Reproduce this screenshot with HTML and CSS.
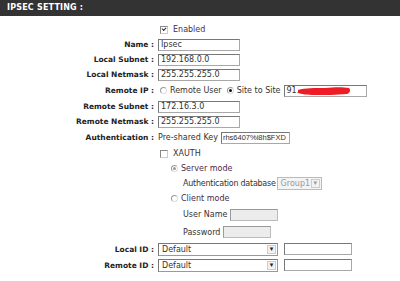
FILE: index.html
```html
<!DOCTYPE html>
<html lang="en">
<head>
    <meta charset="UTF-8">
    <title>IPSEC SETTING</title>
    <link rel="stylesheet" href="styles.css">
</head>
<body>
    <div class="box">
        <div class="title">IPSEC SETTING :</div>

        <div class="form">
            <div class="row r-enabled">
                <div class="lbl"></div>
                <div class="val"><span class="chk on"></span><span class="txt">Enabled</span></div>
            </div>
            <div class="row">
                <div class="lbl">Name :</div>
                <div class="val"><span class="inp w82">Ipsec</span></div>
            </div>
            <div class="row">
                <div class="lbl">Local Subnet :</div>
                <div class="val"><span class="inp w82">192.168.0.0</span></div>
            </div>
            <div class="row">
                <div class="lbl">Local Netmask :</div>
                <div class="val"><span class="inp w82">255.255.255.0</span></div>
            </div>
            <div class="row r-tall">
                <div class="lbl">Remote IP :</div>
                <div class="val">
                    <span class="rad"></span><span class="txt">Remote User</span>
                    <span class="rad on"></span><span class="txt">Site to Site</span>
                    <span class="inp w82 ip">91.<svg class="mark" width="54" height="10" viewBox="0 0 54 10"><path d="M1 4 C8 2 18 2 28 2 C38 1 46 1 52 2 C54 4 53 7 50 8 C40 9 28 9 18 9 C10 9 4 8 1 7 Z" fill="#ee1c25"/></svg></span>
                </div>
            </div>
            <div class="row">
                <div class="lbl">Remote Subnet :</div>
                <div class="val"><span class="inp w82">172.16.3.0</span></div>
            </div>
            <div class="row">
                <div class="lbl">Remote Netmask :</div>
                <div class="val"><span class="inp w82">255.255.255.0</span></div>
            </div>
            <div class="row r-tall">
                <div class="lbl">Authentication :</div>
                <div class="val"><span class="txt">Pre-shared Key</span><span class="inp key">rhs6407%i8h$FXD</span></div>
            </div>
            <div class="row">
                <div class="lbl"></div>
                <div class="val"><span class="chk"></span><span class="txt">XAUTH</span></div>
            </div>
            <div class="row">
                <div class="lbl"></div>
                <div class="val sub"><span class="rad on dis"></span><span class="txt">Server mode</span></div>
            </div>
            <div class="row">
                <div class="lbl"></div>
                <div class="val sub2"><span class="txt narrow">Authentication database</span><span class="sel dis w44"><span class="opt">Group1</span><span class="arr">&#9662;</span></span></div>
            </div>
            <div class="row">
                <div class="lbl"></div>
                <div class="val sub"><span class="rad"></span><span class="txt">Client mode</span></div>
            </div>
            <div class="row r-user">
                <div class="lbl"></div>
                <div class="val sub2"><span class="txt">User Name</span><span class="inp dis w48"></span></div>
            </div>
            <div class="row r-pass">
                <div class="lbl"></div>
                <div class="val sub2"><span class="txt">Password</span><span class="inp dis w48"></span></div>
            </div>
            <div class="row r-id">
                <div class="lbl">Local ID :</div>
                <div class="val"><span class="sel w120"><span class="opt">Default</span><span class="arr">&#9662;</span></span><span class="inp w68 gap"></span></div>
            </div>
            <div class="row r-id">
                <div class="lbl">Remote ID :</div>
                <div class="val"><span class="sel w120"><span class="opt">Default</span><span class="arr">&#9662;</span></span><span class="inp w68 gap"></span></div>
            </div>
        </div>
    </div>
</body>
</html>
```

FILE: styles.css
```css
body {
    margin: 0;
    background: #fff;
    font-family: "DejaVu Sans", Verdana, sans-serif;
    font-size: 8px;
    color: #333;
}

.title {
    height: 16px;
    line-height: 16px;
    padding-left: 7px;
    background-color: #333;
    color: #fff;
    font-weight: bold;
    font-size: 8px;
    letter-spacing: 0.2px;
}

.form {
    padding-top: 6px;
}

.row {
    display: flex;
    align-items: center;
    height: 15px;
}

.r-tall {
    height: 17px;
}

.r-user {
    height: 17px;
}

.r-pass {
    height: 18px;
}

.r-id {
    height: 16px;
}

.lbl {
    width: 154px;
    text-align: right;
    font-weight: bold;
    color: #222;
    white-space: nowrap;
    font-size: 7.5px;
}

.val {
    display: flex;
    align-items: center;
    padding-left: 4px;
    white-space: nowrap;
}

.sub {
    padding-left: 15px;
}

.sub2 {
    padding-left: 29px;
}

.txt {
    margin-right: 3px;
}

.narrow {
    letter-spacing: -0.25px;
    margin-right: 1px;
}

.r-enabled .txt,
.sub .txt {
    color: #4a2a4a;
}

.inp {
    display: inline-block;
    box-sizing: border-box;
    height: 12px;
    line-height: 10px;
    padding-left: 2px;
    border: 1px solid #a8a8a8;
    border-top-color: #777;
    border-left-color: #777;
    background: #fff;
    color: #333;
    overflow: hidden;
}

.inp.dis {
    background: #ececec;
    border-color: #bbb;
    border-top-color: #999;
    border-left-color: #999;
}

.w82 { width: 82px; }
.w48 { width: 48px; }
.w68 { width: 68px; }

.ip {
    width: 83px;
    position: relative;
}

.mark {
    position: absolute;
    left: 12px;
    top: 0;
}

.key {
    width: 69px;
    padding-left: 1px;
    font-family: "Liberation Sans", Arial, sans-serif;
    font-size: 7.5px;
}

.gap {
    margin-left: 6px;
}

.chk {
    display: inline-block;
    box-sizing: border-box;
    width: 8px;
    height: 8px;
    margin: 0 5px 0 2px;
    border: 1px solid #888;
    border-right-color: #ccc;
    border-bottom-color: #ccc;
    background: #fff;
    position: relative;
}

.chk.on::after {
    content: "";
    position: absolute;
    left: 1px;
    top: 0px;
    width: 3px;
    height: 2px;
    border-left: 1.5px solid #222;
    border-bottom: 1.5px solid #222;
    transform: rotate(-45deg);
}

.rad {
    display: inline-block;
    box-sizing: border-box;
    width: 7px;
    height: 7px;
    margin: 0 3px 0 2px;
    border-radius: 50%;
    border: 1px solid #999;
    border-right-color: #ddd;
    border-bottom-color: #ddd;
    background: #fff;
    position: relative;
}

.rad.on::after {
    content: "";
    position: absolute;
    left: 1px;
    top: 1px;
    width: 3px;
    height: 3px;
    border-radius: 50%;
    background: #111;
}

.rad.dis::after {
    background: #999;
}

.rad + .txt + .rad {
    margin-left: 2px;
}

.sel {
    display: inline-flex;
    box-sizing: border-box;
    height: 13px;
    border: 1px solid #999;
    border-top-color: #777;
    border-left-color: #777;
    background: #fff;
    color: #333;
}

.sel.dis {
    color: #999;
    border-color: #bbb;
    background: #f4f4f4;
}

.w120 { width: 120px; }
.w44 { width: 45px; }

.opt {
    flex: 1;
    padding-left: 3px;
    line-height: 11px;
}

.arr {
    width: 9px;
    height: 9px;
    margin: 1px;
    box-sizing: border-box;
    border: 1px solid #ccc;
    background: #f2f2f2;
    font-size: 7px;
    line-height: 7px;
    text-align: center;
    color: #222;
}

.sel.dis .arr {
    color: #999;
}
```
